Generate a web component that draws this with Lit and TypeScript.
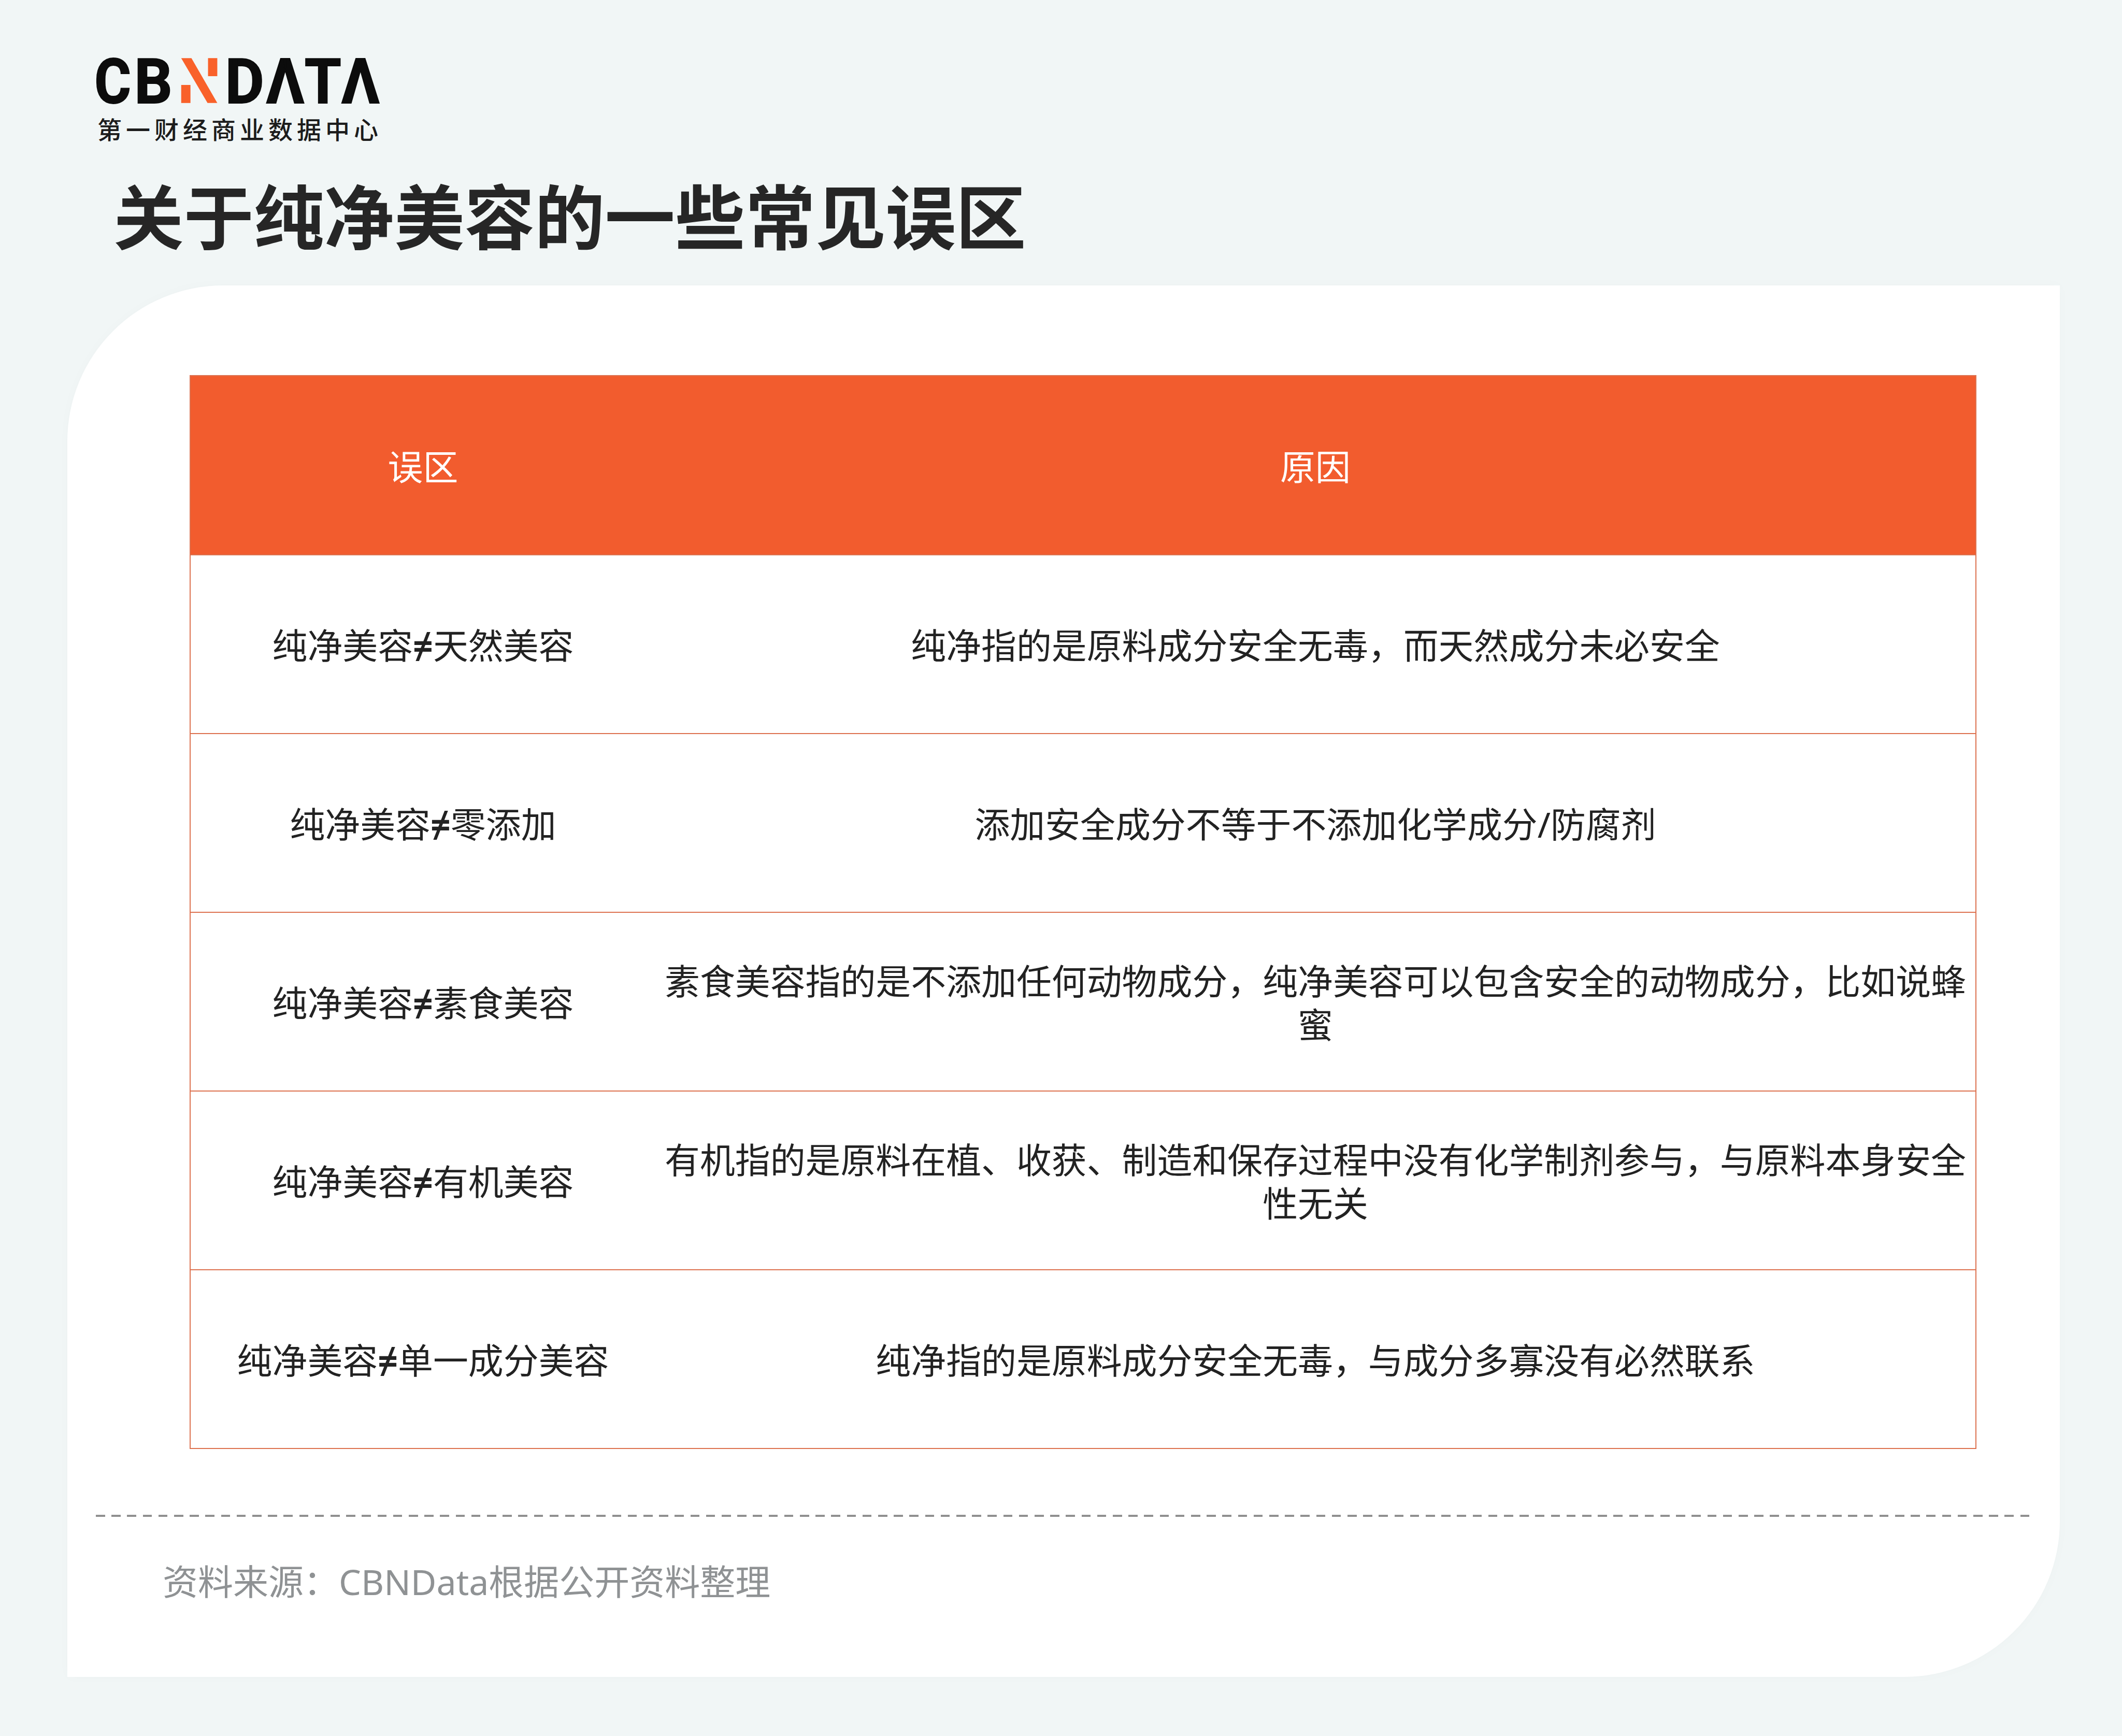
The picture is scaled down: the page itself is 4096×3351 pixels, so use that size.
import { LitElement, html, css } from "lit";
import { customElement } from "lit/decorators.js";

const rows: [string, string, string][] = [
  ["纯净美容", "天然美容", "纯净指的是原料成分安全无毒，而天然成分未必安全"],
  ["纯净美容", "零添加", "添加安全成分不等于不添加化学成分/防腐剂"],
  ["纯净美容", "素食美容", "素食美容指的是不添加任何动物成分，纯净美容可以包含安全的动物成分，比如说蜂蜜"],
  ["纯净美容", "有机美容", "有机指的是原料在植、收获、制造和保存过程中没有化学制剂参与，与原料本身安全性无关"],
  ["纯净美容", "单一成分美容", "纯净指的是原料成分安全无毒，与成分多寡没有必然联系"],
];

@customElement("app-root")
export class AppRoot extends LitElement {
  static styles = css`
    :host {
      display: block;
      width: 4096px;
      height: 3351px;
      overflow: hidden;
      background: #f1f6f6;
      font-family: "Noto Sans", "Noto Sans CJK SC", sans-serif;
    }
    .brand {
      display: flex;
      flex-direction: column;
      height: 551px;
      box-sizing: border-box;
      padding: 112px 0 0 185px;
    }
    .logo {
      display: block;
      width: 547px;
      height: 87px;
      overflow: visible;
    }
    .logo text {
      font-family: "Roboto", "Liberation Sans", sans-serif;
      font-weight: 700;
      font-size: 129px;
      fill: #0c0c0c;
      stroke: #0c0c0c;
      stroke-width: 2px;
    }
    .tagline {
      margin-top: 22px;
      padding-left: 3px;
      font-size: 47px;
      line-height: 58px;
      letter-spacing: 8px;
      font-weight: 500;
      color: #1c1c1c;
      white-space: nowrap;
    }
    h1 {
      margin: 50px 0 0 34px;
      font-size: 135.5px;
      line-height: 180px;
      font-weight: 700;
      color: #262626;
      white-space: nowrap;
    }
    .card {
      box-sizing: border-box;
      margin-left: 130px;
      width: 3846px;
      height: 2686px;
      padding: 173px 161px 0 236px;
      background: #ffffff;
      border-radius: 301px 0 301px 0;
      box-shadow: 0 0 24px rgba(60, 70, 90, 0.02);
    }
    table {
      width: 3449px;
      height: 2072px;
      border-collapse: collapse;
      table-layout: fixed;
      font-size: 67.9px;
      line-height: 84px;
      color: #222222;
      text-align: center;
    }
    th, td {
      box-sizing: border-box;
      padding: 5px 14px 0;
      font-weight: 400;
      border-top: 2px solid #dd7250;
      border-bottom: 2px solid #dd7250;
    }
    th {
      height: 346px;
      background: #f25c2e;
      color: #ffffff;
    }
    td { height: 345px; }
    .c1 { width: 898px; border-left: 2px solid #dd7250; }
    .c2 { border-right: 2px solid #dd7250; }
    .ne { font-weight: 700; }
    .dash {
      height: 4px;
      margin: 127px 0 0 -181px;
      width: 3733px;
      background: repeating-linear-gradient(90deg, #8f8f8f 0 17.6px, transparent 17.6px 30.2px);
    }
    .source {
      margin: 80px 0 0 -52px;
      font-size: 68px;
      line-height: 90px;
      color: #8f9294;
      white-space: nowrap;
    }
  `;

  render() {
    return html`
      <header class="brand">
        <svg class="logo" viewBox="197 119 581 92" role="img" aria-label="CBNDATA">
          <text x="194" y="211" textLength="75" lengthAdjust="spacingAndGlyphs">C</text>
          <text x="276" y="211" textLength="78" lengthAdjust="spacingAndGlyphs">B</text>
          <polygon fill="#f9612a" points="372,119 393,119 446,211 426,211" />
          <rect fill="#f9612a" x="427" y="119" width="19" height="37" />
          <rect fill="#f9612a" x="372" y="174" width="19" height="37" />
          <text x="462" y="211" textLength="80" lengthAdjust="spacingAndGlyphs">D</text>
          <text x="546" y="211" textLength="233" lengthAdjust="spacingAndGlyphs">ΛTΛ</text>
        </svg>
        <div class="tagline">第一财经商业数据中心</div>
        <h1>关于纯净美容的一些常见误区</h1>
      </header>
      <section class="card">
        <table>
          <thead>
            <tr><th class="c1">误区</th><th class="c2">原因</th></tr>
          </thead>
          <tbody>
            ${rows.map(
              ([a, n, b]) =>
                html`<tr><td class="c1">${a}<span class="ne">≠</span>${n}</td><td class="c2">${b}</td></tr>`
            )}
          </tbody>
        </table>
        <div class="dash"></div>
        <div class="source">资料来源：CBNData根据公开资料整理</div>
      </section>
    `;
  }
}
